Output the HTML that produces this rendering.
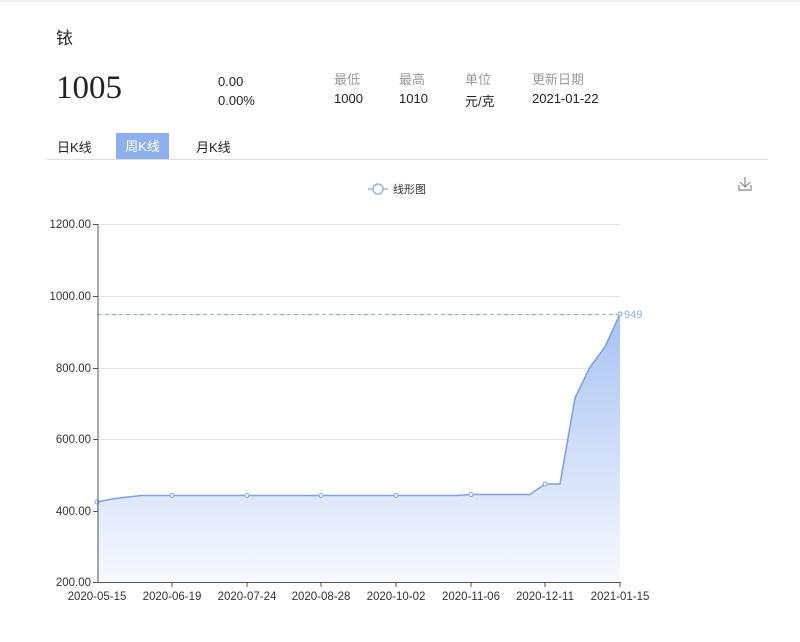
<!DOCTYPE html>
<html><head><meta charset="utf-8"><style>
body{margin:0;width:800px;height:642px;background:#fff;font-family:"Liberation Sans","Noto Sans CJK SC",sans-serif;position:relative;overflow:hidden;color:#222}
.a{position:absolute;white-space:nowrap}
</style></head><body>
<div style="position:absolute;left:0;top:0;width:800px;height:2px;background:#eee"></div>
<div class="a" style="left:56px;top:24px;font-size:17px">铱</div>
<div class="a" style="left:56px;top:70px;font-size:33px;font-family:'Liberation Serif',serif">1005</div>
<div class="a" style="left:218px;top:74px;font-size:13px">0.00</div>
<div class="a" style="left:218px;top:93px;font-size:13px">0.00%</div>
<div class="a" style="left:334px;top:69px;font-size:13px;color:#999">最低</div>
<div class="a" style="left:334px;top:91px;font-size:13px">1000</div>
<div class="a" style="left:399px;top:69px;font-size:13px;color:#999">最高</div>
<div class="a" style="left:399px;top:91px;font-size:13px">1010</div>
<div class="a" style="left:465px;top:69px;font-size:13px;color:#999">单位</div>
<div class="a" style="left:465px;top:91px;font-size:13px">元/克</div>
<div class="a" style="left:532px;top:69px;font-size:13px;color:#999">更新日期</div>
<div class="a" style="left:532px;top:91px;font-size:13px">2021-01-22</div>
<div class="a" style="left:57px;top:137px;font-size:13px">日K线</div>
<div class="a" style="left:116px;top:133px;width:53px;height:27px;background:#8fb0ee;color:#fff;font-size:13px;line-height:27px;text-align:center">周K线</div>
<div class="a" style="left:196px;top:137px;font-size:13px">月K线</div>
<div class="a" style="left:47px;top:159px;width:721px;height:1px;background:#ddd"></div>
<svg class="a" style="left:0;top:0" width="800" height="642">
<g stroke="#89abe0" stroke-width="1.3" fill="#fff"><line x1="368" y1="189" x2="388" y2="189"/><circle cx="378" cy="189" r="5"/></g>
<text x="393" y="193" font-size="11" fill="#333" font-family="Liberation Sans,Noto Sans CJK SC,sans-serif">线形图</text>
<g stroke="#888" stroke-width="1.2" fill="none"><path d="M745 177v10M740 182l5 5 5-5M739 185v5h12v-5"/></g>
<defs><linearGradient id="g" x1="0" y1="0" x2="0" y2="1"><stop offset="0" stop-color="#a9c2f3"/><stop offset="1" stop-color="#f7f9fe"/></linearGradient></defs>
<g stroke="#e3e3e3" stroke-width="1"><line x1="98" y1="224.5" x2="620" y2="224.5"/><line x1="98" y1="296.5" x2="620" y2="296.5"/><line x1="98" y1="368.5" x2="620" y2="368.5"/><line x1="98" y1="439.5" x2="620" y2="439.5"/><line x1="98" y1="511.5" x2="620" y2="511.5"/></g>
<path d="M97 502L112 499L127 497L142 495.5L456 495.5L471 494.5L530 494.5L545 484L560 484L575 398L590 367L605 347L620 314L620 582L97 582Z" fill="url(#g)"/>
<line x1="98" y1="314.5" x2="620" y2="314.5" stroke="#8eaee0" stroke-dasharray="4,3"/>
<path d="M97 502L112 499L127 497L142 495.5L456 495.5L471 494.5L530 494.5L545 484L560 484L575 398L590 367L605 347L620 314" fill="none" stroke="#7fa2dc" stroke-width="1.6"/>
<g fill="#fff" stroke="#7fa2dc" stroke-width="1"><circle cx="97" cy="502" r="2"/><circle cx="172" cy="495.5" r="2"/><circle cx="247" cy="495.5" r="2"/><circle cx="321" cy="495.5" r="2"/><circle cx="396" cy="495.5" r="2"/><circle cx="471" cy="494.5" r="2"/><circle cx="545" cy="484" r="2"/><circle cx="620" cy="314" r="2"/></g>
<text x="624" y="318" font-size="11" fill="#8eaee0">949</text>
<line x1="98" y1="224" x2="98" y2="583" stroke="#555"/>
<line x1="97" y1="582.5" x2="621" y2="582.5" stroke="#555"/>
<g stroke="#555"><line x1="93" y1="224.5" x2="98" y2="224.5"/><line x1="93" y1="296.5" x2="98" y2="296.5"/><line x1="93" y1="368.5" x2="98" y2="368.5"/><line x1="93" y1="439.5" x2="98" y2="439.5"/><line x1="93" y1="511.5" x2="98" y2="511.5"/><line x1="93" y1="582.5" x2="98" y2="582.5"/>
<line x1="172" y1="582" x2="172" y2="587"/><line x1="247" y1="582" x2="247" y2="587"/><line x1="321" y1="582" x2="321" y2="587"/><line x1="396" y1="582" x2="396" y2="587"/><line x1="471" y1="582" x2="471" y2="587"/><line x1="545" y1="582" x2="545" y2="587"/><line x1="620" y1="582" x2="620" y2="587"/></g>
<g font-size="11.5" fill="#333" text-anchor="end"><text x="91" y="228">1200.00</text><text x="91" y="300">1000.00</text><text x="91" y="372">800.00</text><text x="91" y="443">600.00</text><text x="91" y="515">400.00</text><text x="91" y="586">200.00</text></g>
<g font-size="11.5" fill="#333" text-anchor="middle"><text x="97" y="600">2020-05-15</text><text x="172" y="600">2020-06-19</text><text x="247" y="600">2020-07-24</text><text x="321" y="600">2020-08-28</text><text x="396" y="600">2020-10-02</text><text x="471" y="600">2020-11-06</text><text x="545" y="600">2020-12-11</text><text x="620" y="600">2021-01-15</text></g>
</svg>
</body></html>
